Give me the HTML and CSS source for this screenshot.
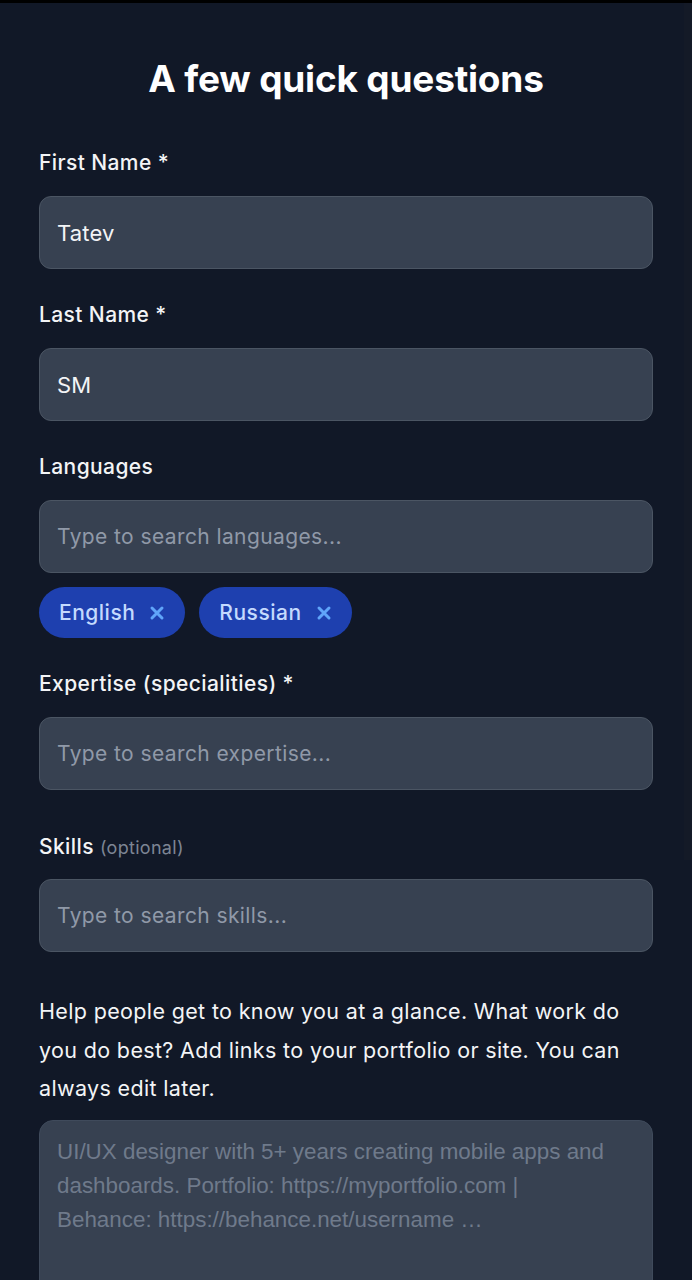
FILE: index.html
```html
<!DOCTYPE html>
<html lang="en">
<head>
<meta charset="utf-8">
<title>A few quick questions</title>
<link rel="stylesheet" href="styles.css">
</head>
<body>
<div class="topbar"></div>
<main class="page">
  <h1 class="title">A few quick questions</h1>
  <form class="form">
    <div class="field">
      <label class="label">First Name *</label>
      <div class="input">Tatev</div>
    </div>
    <div class="field">
      <label class="label">Last Name *</label>
      <div class="input">SM</div>
    </div>
    <div class="field">
      <label class="label">Languages</label>
      <div class="input placeholder">Type to search languages...</div>
      <div class="chips">
        <span class="chip">English
          <svg class="chip-x" viewBox="0 0 16 16" width="16" height="16"><path d="M3 3L13 13M13 3L3 13" stroke="#60a5fa" stroke-width="3" stroke-linecap="round"/></svg>
        </span>
        <span class="chip">Russian
          <svg class="chip-x" viewBox="0 0 16 16" width="16" height="16"><path d="M3 3L13 13M13 3L3 13" stroke="#60a5fa" stroke-width="3" stroke-linecap="round"/></svg>
        </span>
      </div>
    </div>
    <div class="field field-spaced">
      <label class="label">Expertise (specialities) *</label>
      <div class="input placeholder">Type to search expertise...</div>
    </div>
    <div class="field">
      <label class="label label-tight">Skills <span class="optional">(optional)</span></label>
      <div class="input placeholder">Type to search skills...</div>
    </div>
    <div class="field field-bio">
      <p class="help">Help people get to know you at a glance. What work do you do best? Add links to your portfolio or site. You can always edit later.</p>
      <div class="textarea">UI/UX designer with 5+ years creating mobile apps and dashboards. Portfolio: https://myportfolio.com | Behance: https://behance.net/username …</div>
    </div>
  </form>
</main>
<div class="scrollbar"></div>
</body>
</html>
```

FILE: styles.css
```css
html, body {
  margin: 0;
  padding: 0;
  background: #111827;
}
body {
  font-family: Inter, "Noto Sans", sans-serif;
  color: #f3f4f6;
  height: 1280px;
  overflow: hidden;
  position: relative;
}
.topbar {
  height: 3px;
  background: #000;
}
.page {
  padding: 0 39px;
}
.title {
  margin: 0;
  padding-top: 54px;
  height: 91px;
  box-sizing: border-box;
  text-align: center;
  font-size: 37px;
  line-height: 44px;
  font-weight: 700;
  letter-spacing: -0.2px;
  color: #ffffff;
}
.form {
  display: flex;
  flex-direction: column;
  gap: 32px;
  padding-top: 55px;
}
.field {
  display: flex;
  flex-direction: column;
}
.label {
  font-size: 21px;
  line-height: 28px;
  font-weight: 500;
  letter-spacing: 0.4px;
  color: #f3f4f6;
  margin-bottom: 19px;
}
.label-tight {
  margin-bottom: 17px;
}
.optional {
  font-size: 18px;
  font-weight: 400;
  letter-spacing: 0.3px;
  color: #7d8594;
}
.input {
  height: 73px;
  box-sizing: border-box;
  border: 1px solid #4b5563;
  background: #374151;
  border-radius: 12px;
  padding: 0 17px;
  display: flex;
  align-items: center;
  font-size: 22px;
  letter-spacing: 0.2px;
  color: #f3f4f6;
}
.input.placeholder {
  font-size: 21px;
  letter-spacing: 0.4px;
  color: #9099a8;
}
.chips {
  display: flex;
  gap: 14px;
  margin-top: 14px;
}
.chip {
  height: 51px;
  box-sizing: border-box;
  border-radius: 26px;
  background: #1e40af;
  color: #c4dafe;
  font-size: 21px;
  font-weight: 500;
  letter-spacing: 0.5px;
  display: inline-flex;
  align-items: center;
  gap: 14px;
  padding: 0 20px 0 20px;
}
.chip-x {
  display: block;
}
.field-spaced {
  margin-bottom: 11px;
}
.field-bio {
  margin-top: 8px;
}
.help {
  margin: 0 0 12px;
  font-size: 21.5px;
  line-height: 38.5px;
  letter-spacing: 0.35px;
  color: #f3f4f6;
}
.textarea {
  height: 200px;
  box-sizing: border-box;
  border: 1px solid #3f4a5b;
  background: #374151;
  border-radius: 14px;
  padding: 14px 40px 14px 17px;
  font-family: "Liberation Sans", Arial, sans-serif;
  font-size: 22.4px;
  line-height: 34px;
  color: #6f7a8b;
}
.scrollbar {
  position: absolute;
  top: 3px;
  right: 0;
  width: 8px;
  height: 857px;
  background: #141a27;
}
```
